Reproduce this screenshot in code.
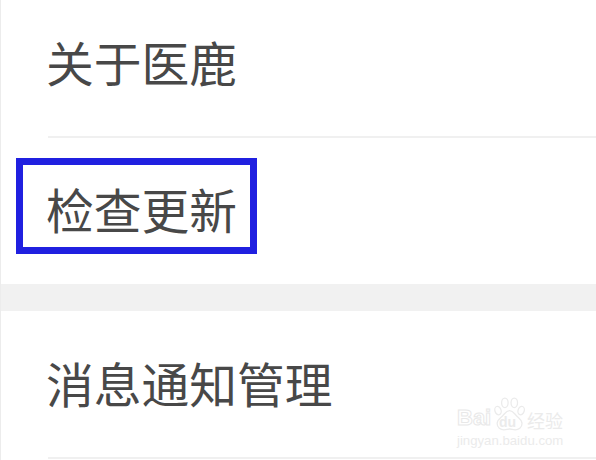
<script>
  const topRows = ["关于医鹿", "检查更新"];
</script>

<div class="page">
  <section class="group">
    <div class="row first"><span class="label">{topRows[0]}</span></div>
    <div class="row last">
      <span class="label">{topRows[1]}</span>
      <div class="mark"></div>
    </div>
  </section>
  <div class="band"></div>
  <section class="group">
    <div class="row third"><span class="label">消息通知管理</span></div>
  </section>

  <div class="watermark">
    <div class="logo">
      <span class="bai">Bai</span>
      <svg width="38" height="36" viewBox="0 0 44 42" aria-hidden="true">
        <g fill="none" stroke="#ebebeb" stroke-width="1.500">
          <ellipse cx="8" cy="17" rx="3.600" ry="5" transform="rotate(-18 8 17)" />
          <ellipse cx="16" cy="8" rx="3.800" ry="5.600" />
          <ellipse cx="27" cy="8" rx="3.800" ry="5.600" />
          <ellipse cx="35" cy="17" rx="3.600" ry="5" transform="rotate(18 35 17)" />
          <path d="M21.500 17c-4 0-5.500 3.500-8 6-3 3-6.500 4.500-6.500 9 0 5 4 7.500 8 7.500 2.500 0 4.500-1 6.500-1s4 1 6.500 1c4 0 8-2.500 8-7.500 0-4.500-3.500-6-6.500-9-2.500-2.500-4-6-8-6z" />
        </g>
      </svg>
      <span class="du">du</span>
      <span class="jy">经验</span>
    </div>
    <div class="url">jingyan.baidu.com</div>
  </div>
</div>

<style>
  :global(body) {
    margin: 0;
    background: #fff;
  }
  .page {
    position: relative;
    width: 596px;
    height: 460px;
    box-sizing: border-box;
    overflow: hidden;
    border-left: 1px solid #ececec;
    font-family: "Noto Sans CJK SC", "Noto Sans", sans-serif;
    color: #484848;
  }
  .group {
    background: #fff;
  }
  .row {
    position: relative;
    display: flex;
    align-items: center;
    margin-left: 47px;
    border-bottom: 2px solid #f0f0f0;
    box-sizing: border-box;
  }
  .first {
    height: 138px;
    padding-bottom: 12px;
  }
  .last {
    height: 146px;
    border-bottom: none;
    padding-bottom: 4px;
  }
  .third {
    height: 148px;
    padding-bottom: 2px;
  }
  .label {
    margin-left: -2px;
    font-size: 47.750px;
    line-height: 1;
  }
  .band {
    height: 27px;
    background: #f1f1f1;
  }
  .mark {
    position: absolute;
    left: -32px;
    top: 20px;
    width: 241px;
    height: 96px;
    box-sizing: border-box;
    border: 7px solid #2020e0;
  }
  .watermark {
    position: absolute;
    left: 456px;
    bottom: 12px;
    width: 112px;
    color: #ebebeb;
    font-family: "Liberation Sans", Arial, sans-serif;
  }
  .logo {
    position: relative;
    display: flex;
    align-items: flex-end;
    height: 38px;
  }
  .bai {
    font-size: 22px;
    line-height: 22px;
    font-weight: 700;
    color: #fff;
    -webkit-text-stroke: 1px #e8e8e8;
  }
  .logo svg {
    position: absolute;
    left: 34px;
    top: 5px;
  }
  .du {
    position: absolute;
    left: 42px;
    top: 24px;
    font-size: 14px;
    line-height: 14px;
    font-weight: 700;
  }
  .jy {
    position: absolute;
    left: 70px;
    top: 19px;
    font-family: "Noto Sans CJK SC", sans-serif;
    font-size: 18px;
    line-height: 20px;
    white-space: nowrap;
  }
  .url {
    margin-top: 4px;
    font-size: 13.200px;
    line-height: 15px;
    white-space: nowrap;
  }
</style>
